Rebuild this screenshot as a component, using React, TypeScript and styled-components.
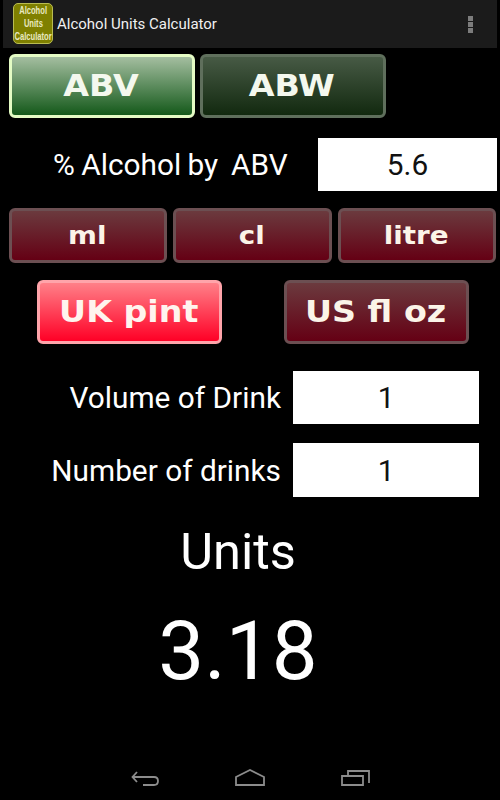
import React from 'react'
import styled, { createGlobalStyle } from 'styled-components'

const GlobalStyle = createGlobalStyle`
  html, body {
    margin: 0;
    padding: 0;
    background: #000;
  }
  * {
    box-sizing: border-box;
  }
`

const Screen = styled.div`
  width: 500px;
  height: 800px;
  background: #000;
  color: #fff;
  font-family: Roboto, "Liberation Sans", sans-serif;
  display: flex;
  flex-direction: column;
  overflow: hidden;
`

const ActionBar = styled.header`
  height: 48px;
  margin: 0 3px;
  padding: 0 24px 0 10px;
  background: #1b1b1b;
  display: flex;
  align-items: center;
  flex-shrink: 0;
`

const AppIcon = styled.div`
  width: 40px;
  height: 41px;
  margin-top: -1px;
  border-radius: 5px;
  border: 1px solid #b9bc52;
  background: #7f8000;
  color: #e9e9c0;
  font-family: "Liberation Sans", sans-serif;
  font-weight: 700;
  font-size: 11.5px;
  line-height: 13.3px;
  display: flex;
  flex-direction: column;
  align-items: center;
  justify-content: center;
  white-space: nowrap;
  span {
    display: block;
    transform: scaleX(0.66);
  }
`

const AppTitle = styled.h1`
  margin: 0 0 0 4px;
  font-size: 15px;
  font-weight: 400;
  color: #f0f0f0;
  flex: 1;
`

const Overflow = styled.div`
  display: flex;
  flex-direction: column;
  gap: 1px;
  i {
    display: block;
    width: 5px;
    height: 5px;
    background: #7c7c7c;
  }
`

const Content = styled.main`
  flex: 1;
  display: flex;
  flex-direction: column;
`

const ModeRow = styled.div`
  display: flex;
  gap: 5px;
  padding: 6px 0 0 9px;
`

const tones = {
  greenOn: {
    edge: '#e4fbc4',
    top: '#a4bea0',
    bottom: '#14591a',
    text: '#f4f8ee',
  },
  greenOff: {
    edge: '#5f6f5c',
    top: '#475a45',
    bottom: '#12290f',
    text: '#f4f8ee',
  },
  redOn: {
    edge: '#ffa4aa',
    top: '#ff8088',
    bottom: '#ff0026',
    text: '#fff4ee',
  },
  redOff: {
    edge: '#6c4f52',
    top: '#6b3a3e',
    bottom: '#650014',
    text: '#fbf4e8',
  },
}

type Tone = keyof typeof tones

const GlossButton = styled.button<{ $tone: Tone; $w: number; $h: number; $size: number }>`
  width: ${({ $w }) => $w}px;
  height: ${({ $h }) => $h}px;
  padding: 0 2px 1px 0;
  border-radius: 6px;
  border: 3px solid ${({ $tone }) => tones[$tone].edge};
  background: linear-gradient(${({ $tone }) => tones[$tone].top}, ${({ $tone }) => tones[$tone].bottom});
  color: ${({ $tone }) => tones[$tone].text};
  font-family: "DejaVu Sans", sans-serif;
  font-weight: 700;
  font-size: ${({ $size }) => $size}px;
  flex-shrink: 0;
  span {
    display: inline-block;
    transform: scaleX(1.11);
  }
`

const AlcoholRow = styled.div`
  display: flex;
  align-items: center;
  height: 53px;
  margin-top: 20px;
  padding-left: 53px;
`

const AlcoholLabel = styled.label`
  width: 265px;
  font-size: 29.8px;
  word-spacing: -1px;
  white-space: pre;
`

const ValueBox = styled.div<{ $w: number; $h?: number }>`
  width: ${({ $w }) => $w}px;
  height: ${({ $h }) => $h ?? 53}px;
  background: #fff;
  color: #111;
  font-size: 29.8px;
  display: flex;
  align-items: center;
  justify-content: center;
`

const UnitRow = styled.div`
  display: flex;
  gap: 6px;
  padding: 17px 0 0 9px;
`

const MeasureRow = styled.div`
  display: flex;
  gap: 62px;
  padding: 17px 0 0 37px;
`

const FieldRow = styled.div<{ $top: number }>`
  display: flex;
  align-items: center;
  justify-content: flex-end;
  gap: 12px;
  margin-top: ${({ $top }) => $top}px;
  padding-right: 21px;
`

const FieldLabel = styled.label`
  font-size: 29.8px;
`

const ResultTitle = styled.div`
  width: 476px;
  margin-top: 25px;
  font-size: 50.6px;
  line-height: 60px;
  text-align: center;
`

const ResultValue = styled.div`
  width: 476px;
  margin-top: 17px;
  font-size: 81.7px;
  line-height: 104px;
  text-align: center;
`

const NavBar = styled.nav`
  height: 48px;
  display: flex;
  align-items: center;
  justify-content: center;
  gap: 76px;
  padding: 3px 0 0 0;
  flex-shrink: 0;
  svg {
    display: block;
    fill: none;
    stroke: #8c8c8c;
    stroke-width: 1.8;
  }
`

export default function App() {
  return (
    <Screen>
      <GlobalStyle />
      <ActionBar>
        <AppIcon>
          <span>Alcohol</span>
          <span>Units</span>
          <span>Calculator</span>
        </AppIcon>
        <AppTitle>Alcohol Units Calculator</AppTitle>
        <Overflow>
          <i />
          <i />
          <i />
        </Overflow>
      </ActionBar>
      <Content>
        <ModeRow>
          <GlossButton $tone="greenOn" $w={186} $h={64} $size={30}><span>ABV</span></GlossButton>
          <GlossButton $tone="greenOff" $w={186} $h={64} $size={30}><span>ABW</span></GlossButton>
        </ModeRow>
        <AlcoholRow>
          <AlcoholLabel>% Alcohol by  ABV</AlcoholLabel>
          <ValueBox $w={179}>5.6</ValueBox>
        </AlcoholRow>
        <UnitRow>
          <GlossButton $tone="redOff" $w={158} $h={55} $size={25}><span>ml</span></GlossButton>
          <GlossButton $tone="redOff" $w={159} $h={55} $size={25}><span>cl</span></GlossButton>
          <GlossButton $tone="redOff" $w={158} $h={55} $size={25}><span>litre</span></GlossButton>
        </UnitRow>
        <MeasureRow>
          <GlossButton $tone="redOn" $w={185} $h={64} $size={30}><span>UK pint</span></GlossButton>
          <GlossButton $tone="redOff" $w={185} $h={64} $size={30}><span>US fl oz</span></GlossButton>
        </MeasureRow>
        <FieldRow $top={27}>
          <FieldLabel>Volume of Drink</FieldLabel>
          <ValueBox $w={186}>1</ValueBox>
        </FieldRow>
        <FieldRow $top={19}>
          <FieldLabel>Number of drinks</FieldLabel>
          <ValueBox $w={186} $h={54}>1</ValueBox>
        </FieldRow>
        <ResultTitle>Units</ResultTitle>
        <ResultValue>3.18</ResultValue>
      </Content>
      <NavBar>
        <svg width="28" height="18" viewBox="0 0 28 18">
          <path d="M6 3 L1.5 8 L6 13 M1.5 8 H23 Q27 8 27 12 Q27 16 23 16 H12" />
        </svg>
        <svg width="30" height="17" viewBox="0 0 30 17">
          <path d="M1 8 L15 1 L29 8 V16 H1 Z" />
        </svg>
        <svg width="29" height="16" viewBox="0 0 29 16">
          <path d="M1 6 H22 V15 H1 Z M7 6 V1 H28 V13" />
        </svg>
      </NavBar>
    </Screen>
  )
}
